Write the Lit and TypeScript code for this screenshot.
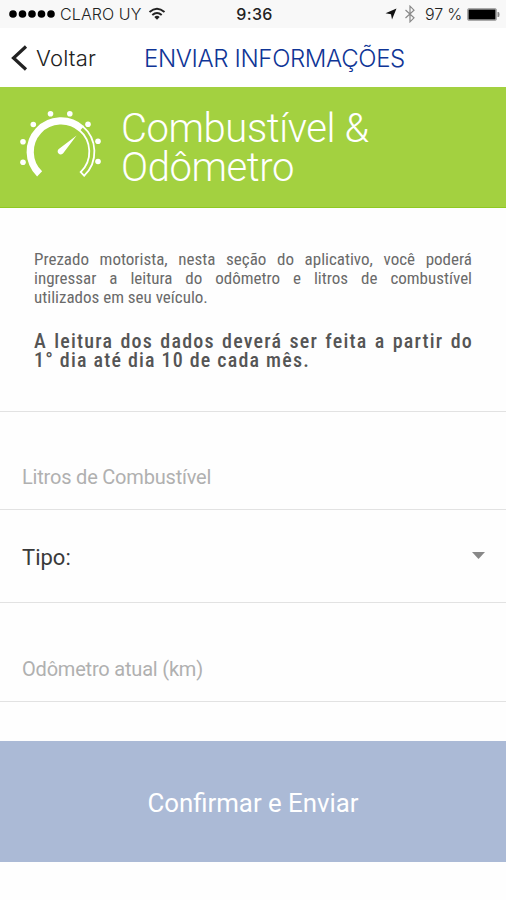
import { LitElement, html, css, svg } from "lit";
import { customElement } from "lit/decorators.js";

const point = (cx: number, cy: number, r: number, deg: number) => {
  const a = (deg * Math.PI) / 180;
  return { x: cx + r * Math.cos(a), y: cy + r * Math.sin(a) };
};

@customElement("status-bar")
class StatusBar extends LitElement {
  static styles = css`
    :host { display: grid; grid-template-columns: 1fr auto 1fr; align-items: center; height: 28px; background: #f8f8f8;
      font: 400 16px/28px Inter, sans-serif; color: #222; padding: 0 6px 0 9px; }
    .side { display: flex; align-items: center; }
    .right { justify-content: flex-end; }
    .dots { width: 46px; height: 10px; margin-right: 5px; }
    .carrier { font-weight: 300; font-size: 16px; letter-spacing: 0.1px; }
    .wifi { width: 18px; height: 14px; margin-left: 7px; }
    .time { font-weight: 500; font-size: 16px; letter-spacing: 0.35px; }
    .loc { width: 12px; height: 12px; margin-right: 8px; }
    .bt { width: 10px; height: 18px; margin-right: 10px; }
    .pct { font-weight: 300; font-size: 16px; letter-spacing: -0.2px; margin-right: 5px; }
    .bat { width: 33px; height: 13px; }
  `;
  render() {
    return html`
      <div class="side">
        <svg class="dots" viewBox="0 0 46 10">${[0, 1, 2, 3, 4].map((i) => svg`<circle cx=${4 + i * 9.5} cy="5" r="3.8"/>`)}</svg>
        <span class="carrier">CLARO UY</span>
        <svg class="wifi" viewBox="0 0 18 14" fill="none" stroke="#222" stroke-width="2">
          <path d="M1.500 5Q9 -1.500 16.500 5"/><path d="M4.300 8Q9 4 13.700 8"/><path d="M6.300 9.900Q9 7.700 11.700 9.900L9 12.800Z" fill="#222" stroke="none"/>
        </svg>
      </div>
      <span class="time">9:36</span>
      <div class="side right">
        <svg class="loc" viewBox="0 0 12 12"><path d="M11.500 .5L7 11.500L6 6.200L.5 5.300Z" fill="#111"/></svg>
        <svg class="bt" viewBox="0 0 10 18" fill="none" stroke="#888" stroke-width="1.200"><path d="M.5 5L9 12.800L5 16.800V1.200L9 5.200L.5 13"/></svg>
        <span class="pct">97 %</span>
        <svg class="bat" viewBox="0 0 33 13"><rect x=".5" y=".5" width="29" height="12" rx="1.500" fill="#ddd" stroke="#aaa"/><rect x="1.500" y="1.500" width="27" height="10" fill="#000"/><path d="M30.500 4h1q1 0 1 2.500t-1 2.500h-1z" fill="#888"/></svg>
      </div>`;
  }
}

@customElement("gauge-icon")
class GaugeIcon extends LitElement {
  static styles = css`
    :host { display: block; width: 84px; height: 72px; }
    svg { display: block; width: 84px; height: 72px; }
  `;
  render() {
    const cx = 42, cy = 41.7;
    const arc = (r: number, from: number, to: number) => {
      const a = point(cx, cy, r, from), b = point(cx, cy, r, to);
      return `M${a.x} ${a.y}A${r} ${r} 0 ${to - from > 180 ? 1 : 0} 1 ${b.x} ${b.y}`;
    };
    const inner = point(cx, cy, 27.5, 406);
    const outer = point(cx, cy, 34.2, 406);
    return html`<svg viewBox="0 0 84 72" fill="none" stroke="#fff">
      <path d=${arc(30.8, 134, 312)} stroke-width="7.200"/>
      <path d=${arc(33.4, 310, 406)} stroke-width="1.800"/>
      <path d=${arc(28.3, 310, 406)} stroke-width="1.800"/>
      <path d=${`M${inner.x} ${inner.y}L${outer.x} ${outer.y}`} stroke-width="1.800"/>
      <path d="M57.600 25.500L44.200 43.200A3.100 3.100 0 1 1 39.800 38.900Z" fill="#fff" stroke="none"/>
      ${[[4, 31.7], [4, 52.3], [14.3, 14.5], [31.5, 3.7], [50.8, 3.7], [69, 14.2], [79, 31.2], [79, 51.5]].map(
        ([x, y]) => svg`<circle cx=${x} cy=${y} r="2.800" fill="#fff" stroke="none"/>`
      )}
    </svg>`;
  }
}

@customElement("app-root")
class AppRoot extends LitElement {
  static styles = css`
    :host { display: flex; flex-direction: column; height: 900px; background: #fefefe; font-family: Roboto, sans-serif; overflow: hidden; }
    .nav { display: flex; align-items: center; height: 59px; padding-left: 11px; background: #fff; box-sizing: border-box; }
    .chev { width: 17px; height: 26px; margin-right: 8px; }
    .back { width: 108px; font: 300 22px/30px Inter, sans-serif; color: #222; letter-spacing: 0.2px; }
    .title { font: 300 24px/30px Inter, sans-serif; color: #0f3596; letter-spacing: -0.36px; white-space: nowrap; padding-top: 2px; }
    .hero { display: flex; height: 121px; box-sizing: border-box; background: #a3d140; border-bottom: 1px solid #8fc922; padding: 23px 0 0 19px; }
    .hero h1 { margin: -1px 0 0 18px; font: 300 40px/39px Roboto, sans-serif; color: #fff; white-space: nowrap; letter-spacing: -0.42px; }
    .info { height: 204px; box-sizing: border-box; padding: 42px 34px 0; border-bottom: 1px solid #e2e2e2; color: #6a6a6a; font-family: "Roboto Condensed", Roboto, sans-serif; font-stretch: 75%; }
    .info p { margin: 0; line-height: 19px; font-size: 17px; }
    .line { display: block; white-space: nowrap; text-align: justify; text-align-last: justify; }
    .last { text-align-last: left; }
    .info .strong { margin-top: 25px; font-size: 20px; font-weight: 500; letter-spacing: 1.2px; color: #555; margin-right: -1px; }
    .row { display: flex; box-sizing: border-box; padding: 0 21px 0 22px; border-bottom: 1px solid #e2e2e2; justify-content: space-between; }
    .field { height: 99px; padding-top: 53px; font: 400 20px/26px Roboto, sans-serif; color: #b0b0b0; letter-spacing: -0.2px; }
    .field.first { height: 98px; padding-top: 52px; }
    .select { height: 93px; align-items: center; font: 400 22px/30px Roboto, sans-serif; color: #3a3a3a; }
    .select span { padding-top: 3px; }
    .arrow { width: 13px; height: 7px; margin-top: -2px; }
    .btn { margin-top: 39px; height: 121px; background: #abbad6; color: #fff; border: 0; font: 400 25.8px/30px Roboto, sans-serif; padding: 3px 0 0; }
  `;
  render() {
    return html`
      <status-bar></status-bar>
      <div class="nav">
        <svg class="chev" viewBox="0 0 17 26" fill="none" stroke="#222" stroke-width="3.200"><path d="M15 1.500L2.500 13L15 24.500"/></svg>
        <span class="back">Voltar</span>
        <span class="title">ENVIAR INFORMAÇÕES</span>
      </div>
      <div class="hero"><gauge-icon></gauge-icon><h1>Combustível &amp;<br />Odômetro</h1></div>
      <div class="info">
        <p>
          <span class="line">Prezado motorista, nesta seção do aplicativo, você poderá</span>
          <span class="line">ingressar a leitura do odômetro e litros de combustível</span>
          <span class="line last">utilizados em seu veículo.</span>
        </p>
        <p class="strong">
          <span class="line">A leitura dos dados deverá ser feita a partir do</span>
          <span class="line last">1° dia até dia 10 de cada mês.</span>
        </p>
      </div>
      <div class="row field first">Litros de Combustível</div>
      <div class="row select"><span>Tipo:</span><svg class="arrow" viewBox="0 0 13 7"><path d="M0 0H13L6.500 7Z" fill="#888"/></svg></div>
      <div class="row field">Odômetro atual (km)</div>
      <button class="btn">Confirmar e Enviar</button>
    `;
  }
}
